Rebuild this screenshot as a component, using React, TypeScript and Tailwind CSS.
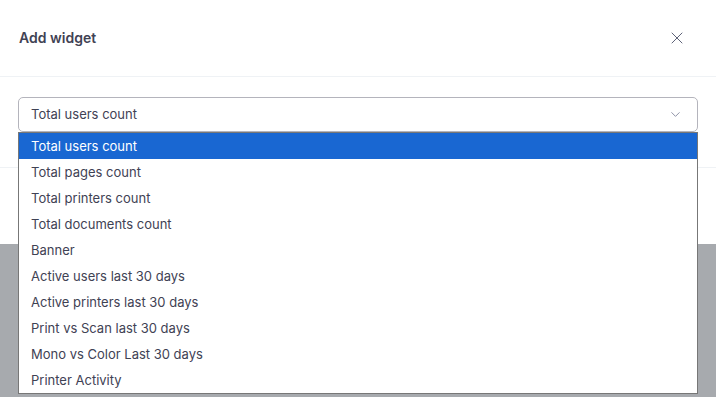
import { X, ChevronDown } from "lucide-react";

const options = [
  "Total users count",
  "Total pages count",
  "Total printers count",
  "Total documents count",
  "Banner",
  "Active users last 30 days",
  "Active printers last 30 days",
  "Print vs Scan last 30 days",
  "Mono vs Color Last 30 days",
  "Printer Activity",
];

export default function App() {
  const selected = 0;

  return (
    <div
      className="relative h-[397px] w-full overflow-hidden bg-[#a7aaae]"
      style={{ fontFamily: "Inter, 'Open Sans', sans-serif" }}
    >
      {/* Modal */}
      <div className="h-[244px] bg-white">
        {/* Header */}
        <div className="flex h-[77px] items-center justify-between border-b border-[#eff2f5] pl-[19px] pr-[29px]">
          <h2 className="pb-[2px] text-[14px] font-semibold text-[#3f4254]">Add widget</h2>
          <button className="text-[#5e6278]" aria-label="Close">
            <X size={20} strokeWidth={1.2} />
          </button>
        </div>

        {/* Body */}
        <div className="h-[91px] border-b border-[#eff2f5] px-[18px] pt-[20px]">
          <div className="flex h-[35px] items-center justify-between rounded-[5px] border border-[#b4b4bc] pl-[12px] pr-[14px]">
            <span className="text-[13px] text-[#3f4254]">{options[selected]}</span>
            <ChevronDown size={15} strokeWidth={1.4} className="text-[#7e8299]" />
          </div>
        </div>
      </div>

      {/* Native-style dropdown list */}
      <ul className="absolute left-[18px] top-[132px] w-[680px] border border-[#777777] bg-white">
        {options.map((opt, idx) => (
          <li
            key={opt}
            className={`flex h-[26px] items-center pl-[12px] pt-[1px] text-[13px] ${
              idx === selected ? "bg-[#1967d2] text-white" : "text-[#3f4254]"
            }`}
          >
            {opt}
          </li>
        ))}
      </ul>
    </div>
  );
}
